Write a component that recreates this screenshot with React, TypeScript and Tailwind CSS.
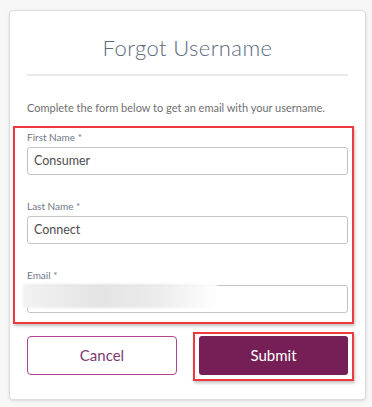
import React from "react";

export default function App() {
  const font = { fontFamily: "Lato, 'Open Sans', sans-serif" };
  return (
    <div className="w-[372px] h-[407px] bg-[#f7f7f7] pt-[10px] pl-[9px]" style={font}>
      <div className="w-[357px] h-[390px] bg-white border border-[#dcdcdc] rounded-[4px] shadow-[0_1px_3px_rgba(0,0,0,0.12)] px-[17px]">
        <div className="h-[63px] flex items-end justify-center pb-[13px]">
          <h1 className="text-[22px] leading-[26px] font-light text-[#5b6a7d] tracking-[0.4px]">Forgot Username</h1>
        </div>
        <div className="h-[2px] bg-[#e8e8e8]" />
        <div className="h-[50px] flex items-center">
          <p className="text-[11px] leading-[14px] text-[#6f6f6f] pt-[14px]">Complete the form below to get an email with your username.</p>
        </div>
        <div className="ml-[-14px] mr-[-6px] h-[198px] border-2 border-[#ee3a3f] shadow-[1px_2px_3px_rgba(0,0,0,0.25)] pl-[12px] pr-[4px]">
          <div className="text-[10px] leading-[14px] text-[#707888] h-[19px] pt-[2px]">First Name *</div>
          <div className="h-[28px] border border-[#c4c4c4] rounded-[3px] flex items-center px-[6px] text-[12.5px] text-[#4d4d4d]">Consumer</div>
          <div className="h-[22px]" />
          <div className="text-[10px] leading-[14px] text-[#707888] h-[19px] pt-[2px]">Last Name *</div>
          <div className="h-[28px] border border-[#c4c4c4] rounded-[3px] flex items-center px-[6px] text-[12.5px] text-[#4d4d4d]">Connect</div>
          <div className="h-[22px]" />
          <div className="text-[10px] leading-[14px] text-[#707888] h-[19px] pt-[2px]">Email *</div>
          <div className="relative h-[28px] border border-[#c4c4c4] rounded-[3px]">
            <div className="absolute left-[-5px] top-[-2px] w-[194px] h-[24px] bg-[linear-gradient(90deg,#f2f2f2_0%,#e4e4e4_40%,#ececec_70%,#ffffff_100%)] blur-[1px]" />
          </div>
        </div>
        <div className="flex mt-[8px] h-[49px] items-start gap-[16px]">
          <div className="w-[150px] mt-[4px] h-[39px] border border-[#b0448f] rounded-[4px] flex items-center justify-center text-[15px] text-[#7d3a72]">Cancel</div>
          <div className="flex-1 mr-[-6px] border-2 border-[#ee3a3f] shadow-[1px_2px_3px_rgba(0,0,0,0.25)] pt-[2px] px-[4px] pb-[4px]">
            <div className="h-[39px] bg-[#751f56] rounded-[3px] flex items-center justify-center text-[15px] text-white">Submit</div>
          </div>
        </div>
      </div>
    </div>
  );
}
